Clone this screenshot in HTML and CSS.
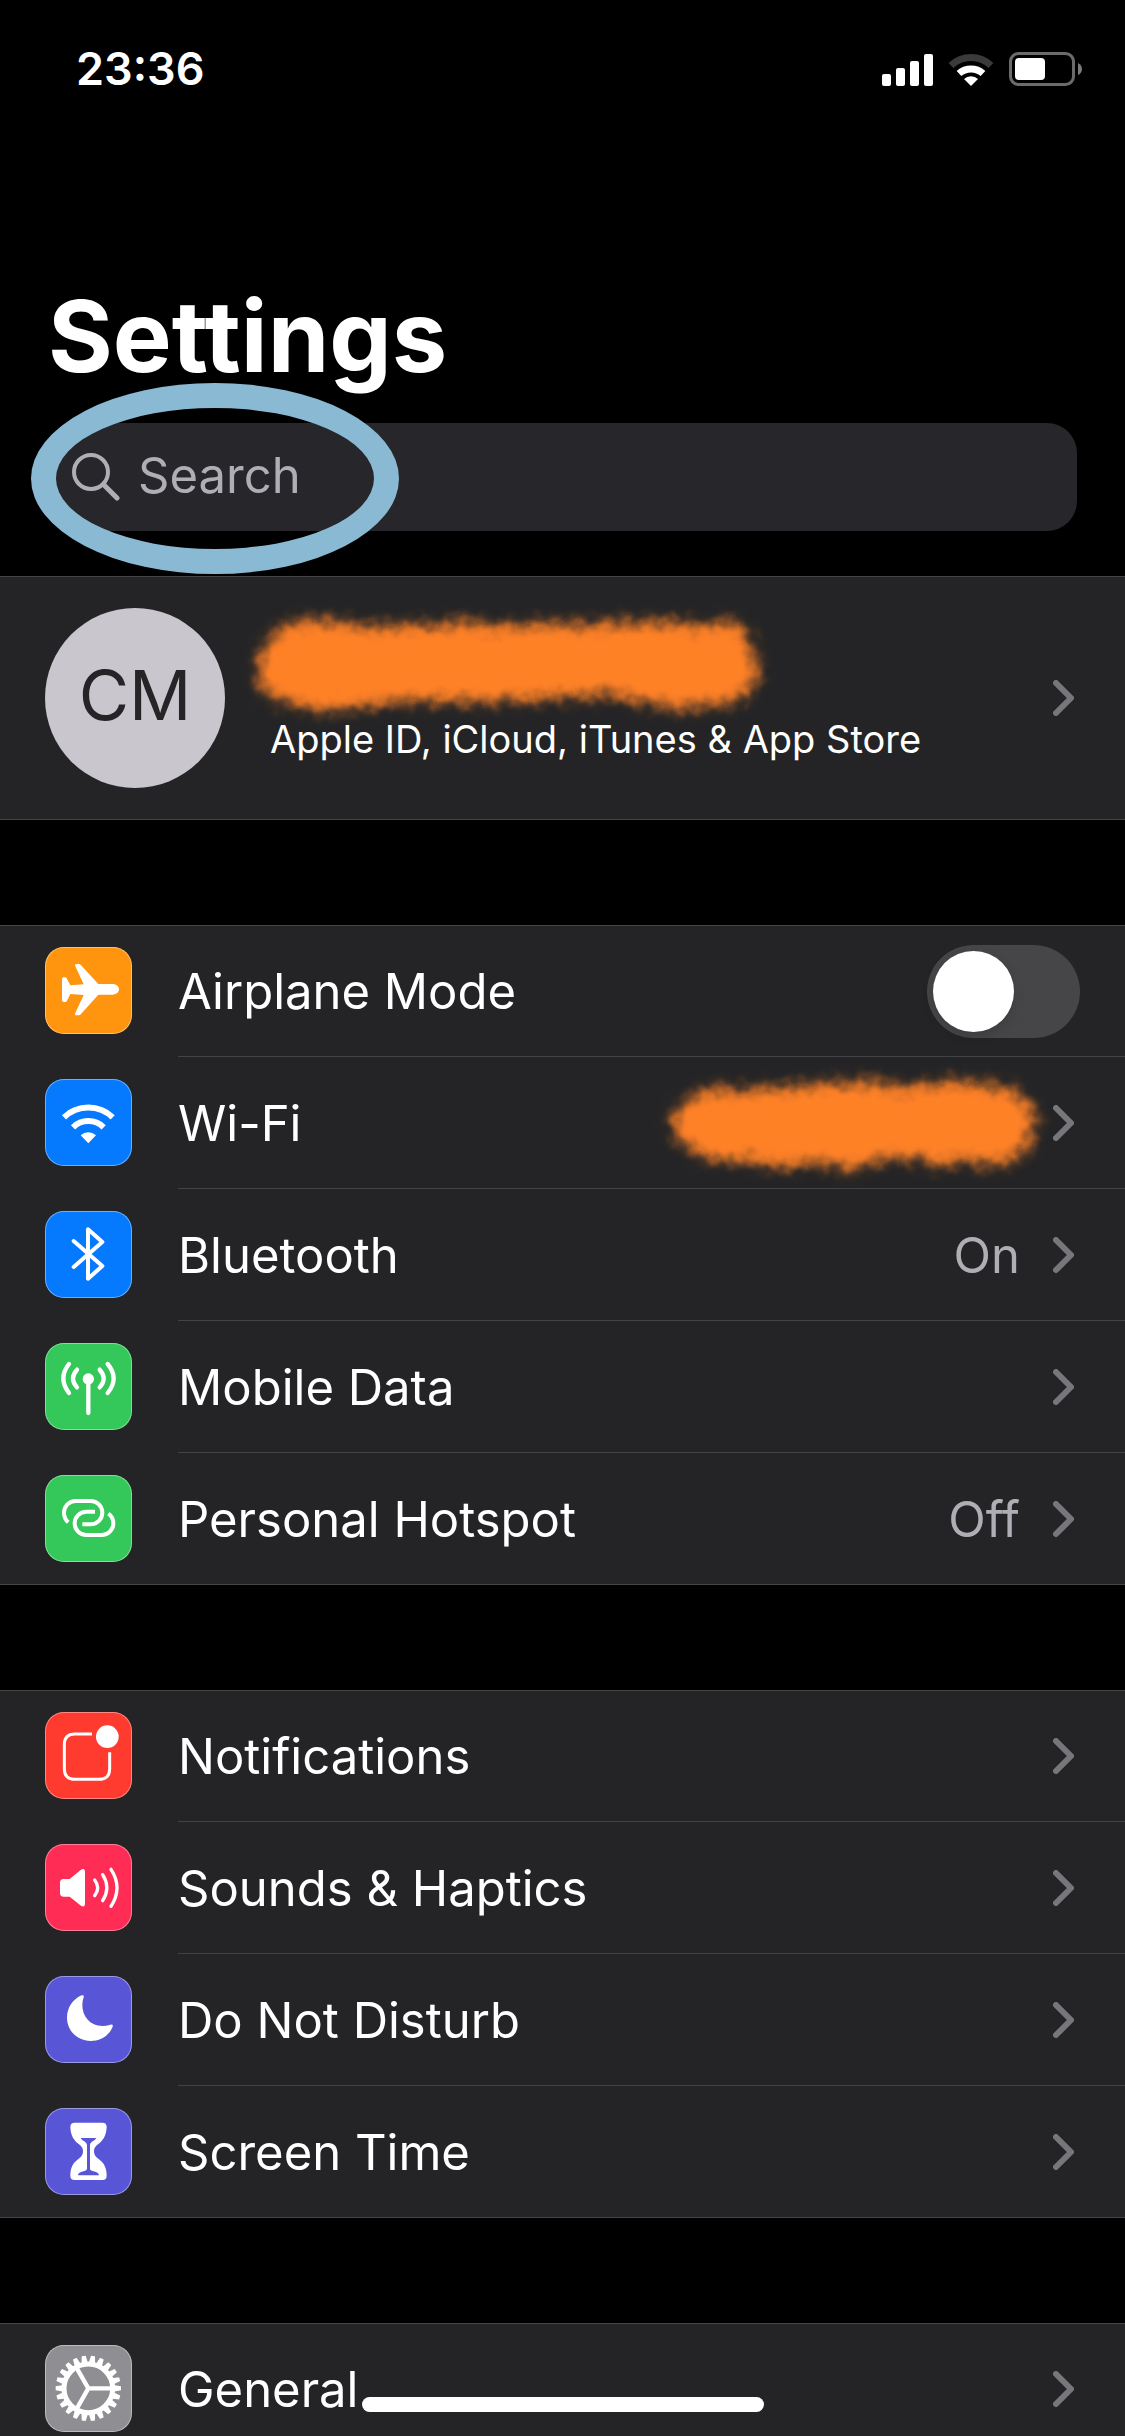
FILE: index.html
```html
<!DOCTYPE html>
<html lang="en">
<head>
<meta charset="utf-8">
<meta name="viewport" content="width=device-width, initial-scale=1">
<title>Settings</title>
<link rel="stylesheet" href="styles.css">
</head>
<body>
<svg class="sprite" aria-hidden="true">
  <defs>
    <symbol id="chevron" viewBox="0 0 21 36"><path d="M3 3 L18 18 L3 33" fill="none" stroke="currentColor" stroke-width="6" stroke-linecap="round" stroke-linejoin="round"/></symbol>
    <path id="tooth" d="M204 120 L228 124 V136 L204 140 Z"/>
    <filter id="soft" x="-10%" y="-25%" width="120%" height="150%">
      <feGaussianBlur stdDeviation="7" result="blurred"/>
      <feTurbulence type="fractalNoise" baseFrequency="0.07" numOctaves="2" seed="4" result="noise"/>
      <feDisplacementMap in="blurred" in2="noise" scale="14" xChannelSelector="R" yChannelSelector="G"/>
    </filter>
  </defs>
</svg>

<div class="screen">
  <div class="status">
    <time class="clock">23:36</time>
    <div class="status-icons">
      <svg width="51" height="33" viewBox="0 0 51 33" fill="#fff" aria-label="Signal">
        <rect x="0" y="21" width="9" height="12" rx="2"/><rect x="14" y="15" width="9" height="18" rx="2"/><rect x="28" y="8" width="9" height="25" rx="2"/><rect x="42" y="1" width="9" height="32" rx="2"/>
      </svg>
      <svg width="46" height="33" viewBox="0 0 46 33" fill="none" stroke-width="7" aria-label="Wi-Fi">
        <path d="M3 12.5 A29 29 0 0 1 43 12.5" stroke="#3a3a3a"/>
        <path d="M11 20.5 A18 18 0 0 1 35 20.5" stroke="#fff"/>
        <path d="M23 33 L16 26 A10 10 0 0 1 30 26 Z" fill="#fff"/>
      </svg>
      <svg width="73" height="34" viewBox="0 0 73 34" aria-label="Battery">
        <rect x="1.5" y="1.5" width="63" height="31" rx="8" fill="none" stroke="#6b6b6b" stroke-width="3"/>
        <rect x="6" y="6" width="30" height="22" rx="4" fill="#fff"/>
        <path d="M69 11 Q73 13 73 17 Q73 21 69 23 Z" fill="#7b7b7b"/>
      </svg>
    </div>
  </div>

  <header class="head">
    <h1 class="title">Settings</h1>
    <div class="search">
      <svg class="search-icon" viewBox="0 0 48 49" fill="none" stroke="#aeaeb4" stroke-width="4" stroke-linecap="round" aria-hidden="true"><circle cx="19" cy="20" r="17"/><path d="M32 33 L45 46" stroke-width="5"/></svg>
      <input class="search-input" type="search" placeholder="Search" aria-label="Search">
      <span class="ring"></span>
    </div>
  </header>

  <main class="groups">
    <section class="group">
      <a class="profile" href="#account">
        <span class="avatar">CM</span>
        <span class="profile-text">Apple ID, iCloud, iTunes &amp; App Store</span>
        <svg class="scribble scribble-name" viewBox="0 0 530 120" aria-hidden="true">
          <path filter="url(#soft)" fill="#ff8128" d="M34 22 L52 14 L85 12 L118 18 L165 18 L215 15 L262 18 L310 15 L350 17 L380 14 L425 14 L460 18 L490 13 L503 26 L512 50 L517 66 L508 80 L492 94 L470 98 L430 100 L395 93 L370 87 L310 90 L240 94 L170 93 L110 99 L72 104 L45 94 L20 85 L14 66 L17 44 Z"/>
        </svg>
        <svg class="chevron"><use href="#chevron"/></svg>
      </a>
    </section>

    <ul class="group">
      <li>
        <label class="row">
          <svg class="icon orange" viewBox="0 0 261 261" fill="#fff" aria-hidden="true"><path d="M51 96 Q51 91 56 91 H60 Q64 91 66 95 L76 115 L116 112 L91 58 Q88 51 95 51 H101 Q105 51 108 55 L160 111 H202 C215 111 222 119 222 127 C222 135 215 143 202 143 H160 L108 201 Q105 205 101 205 H95 Q88 205 91 198 L116 144 L76 141 L66 161 Q64 165 60 165 H56 Q51 165 51 160 Z"/></svg>
          <span class="row-body"><span class="name">Airplane Mode</span><input class="switch" type="checkbox" role="switch"></span>
        </label>
      </li>
      <li>
        <a class="row" href="#wifi">
          <svg class="icon blue" viewBox="0 0 261 261" fill="none" stroke="#fff" stroke-width="18" aria-hidden="true"><path d="M57 115 A106 106 0 0 1 203 115 M84 145 A66 66 0 0 1 176 145"/><path d="M130 193 L107 169 A34 34 0 0 1 153 169 Z" fill="#fff" stroke="none"/></svg>
          <span class="row-body"><span class="name">Wi-Fi</span>
            <svg class="scribble scribble-network" viewBox="0 0 390 120" aria-hidden="true">
              <path filter="url(#soft)" fill="#ff8128" d="M36 28 L55 20 L82 23 L110 20 L160 17 L205 13 L235 19 L270 17 L290 13 L320 15 L355 21 L370 34 L378 50 L376 66 L368 84 L350 93 L330 97 L305 92 L282 97 L250 89 L220 93 L194 102 L165 95 L122 99 L95 93 L60 93 L40 86 L20 70 L13 52 L24 37 Z"/>
            </svg>
            <svg class="chevron"><use href="#chevron"/></svg></span>
        </a>
      </li>
      <li>
        <a class="row" href="#bluetooth">
          <svg class="icon blue" viewBox="0 0 261 261" fill="none" stroke="#fff" stroke-width="12" stroke-linecap="round" stroke-linejoin="round" aria-hidden="true"><path d="M86 90 L172 165 L129 203 V55 L172 93 L86 168"/></svg>
          <span class="row-body"><span class="name">Bluetooth</span><span class="value">On</span><svg class="chevron"><use href="#chevron"/></svg></span>
        </a>
      </li>
      <li>
        <a class="row" href="#mobile-data">
          <svg class="icon green" viewBox="0 0 261 261" fill="none" stroke="#fff" stroke-width="13" stroke-linecap="round" aria-hidden="true"><path d="M130 108 V210 M96 80 Q72 106 96 133 M164 80 Q188 106 164 133 M72 63 Q38 106 72 150 M188 63 Q224 106 188 150"/><circle cx="130" cy="108" r="17" fill="#fff" stroke="none"/></svg>
          <span class="row-body"><span class="name">Mobile Data</span><svg class="chevron"><use href="#chevron"/></svg></span>
        </a>
      </li>
      <li>
        <a class="row" href="#hotspot">
          <svg class="icon green" viewBox="0 0 261 261" fill="none" stroke="#fff" stroke-width="12" aria-hidden="true"><path d="M70 142 C61 134 57 124 57 113 A35 35 0 0 1 92 78 H137 A35 35 0 0 1 137 148 H112" /><path d="M150 110 H124 A35 35 0 0 0 124 180 H170 A35 35 0 0 0 205 145 C205 134 200 123 190 116"/></svg>
          <span class="row-body"><span class="name">Personal Hotspot</span><span class="value">Off</span><svg class="chevron"><use href="#chevron"/></svg></span>
        </a>
      </li>
    </ul>

    <ul class="group">
      <li>
        <a class="row" href="#notifications">
          <svg class="icon red" viewBox="0 0 261 261" fill="none" stroke="#fff" stroke-width="9" aria-hidden="true"><path d="M141 66 H90 Q58 66 58 98 V170 Q58 202 90 202 H162 Q194 202 194 170 V121"/><circle cx="187" cy="74" r="34" fill="#fff" stroke="none"/></svg>
          <span class="row-body"><span class="name">Notifications</span><svg class="chevron"><use href="#chevron"/></svg></span>
        </a>
      </li>
      <li>
        <a class="row" href="#sounds">
          <svg class="icon pink" viewBox="0 0 261 261" fill="none" stroke="#fff" stroke-width="10" stroke-linecap="round" aria-hidden="true"><path d="M45 116 Q45 105 56 105 H74 L108 77 Q120 70 120 84 V178 Q120 192 108 185 L74 158 H56 Q45 158 45 147 Z" fill="#fff" stroke="none"/><path d="M149 108 Q167 131 149 155 M173 92 Q198 131 173 170 M198 76 Q234 131 198 187"/></svg>
          <span class="row-body"><span class="name">Sounds &amp; Haptics</span><svg class="chevron"><use href="#chevron"/></svg></span>
        </a>
      </li>
      <li>
        <a class="row" href="#dnd">
          <svg class="icon indigo" viewBox="0 0 261 261" fill="#fff" aria-hidden="true"><path d="M110 58 Q118 56 116 64 C108 85 112 112 127 130 C143 149 170 155 196 146 Q205 143 203 152 C192 180 165 195 137 195 C98 195 66 164 66 125 C66 95 84 69 110 58 Z"/></svg>
          <span class="row-body"><span class="name">Do Not Disturb</span><svg class="chevron"><use href="#chevron"/></svg></span>
        </a>
      </li>
      <li>
        <a class="row" href="#screen-time">
          <svg class="icon indigo" viewBox="0 0 261 261" fill="#fff" fill-rule="evenodd" aria-hidden="true"><path d="M76 57 Q76 44 89 44 H172 Q185 44 185 57 C184 85 173 98 160 108 C150 116 147 121 147 129 C147 139 150 145 160 152 C175 163 185 176 185 203 Q185 216 172 216 H89 Q76 216 76 203 C76 176 86 163 101 152 C111 145 114 139 114 129 C114 121 111 116 101 108 C88 98 77 85 76 57 Z M107 90 C112 99 125 101 126 111 V183 Q125 187 118 189 C105 192 100 196 99 202 H162 C161 196 156 192 143 189 Q135 187 135 183 V111 C136 101 149 99 154 90 Z"/></svg>
          <span class="row-body"><span class="name">Screen Time</span><svg class="chevron"><use href="#chevron"/></svg></span>
        </a>
      </li>
    </ul>

    <ul class="group">
      <li>
        <a class="row" href="#general">
          <svg class="icon gray" viewBox="0 0 261 261" fill="#fff" aria-hidden="true">
            <circle cx="130" cy="130" r="73" fill="none" stroke="#fff" stroke-width="15"/>
            <path d="M130 130 H203 M130 130 L94 67 M130 130 L94 193" stroke="#fff" stroke-width="13"/>
            <use href="#tooth"/>
            <use href="#tooth" transform="rotate(16.36 130 130)"/>
            <use href="#tooth" transform="rotate(32.73 130 130)"/>
            <use href="#tooth" transform="rotate(49.09 130 130)"/>
            <use href="#tooth" transform="rotate(65.45 130 130)"/>
            <use href="#tooth" transform="rotate(81.82 130 130)"/>
            <use href="#tooth" transform="rotate(98.18 130 130)"/>
            <use href="#tooth" transform="rotate(114.55 130 130)"/>
            <use href="#tooth" transform="rotate(130.91 130 130)"/>
            <use href="#tooth" transform="rotate(147.27 130 130)"/>
            <use href="#tooth" transform="rotate(163.64 130 130)"/>
            <use href="#tooth" transform="rotate(180 130 130)"/>
            <use href="#tooth" transform="rotate(196.36 130 130)"/>
            <use href="#tooth" transform="rotate(212.73 130 130)"/>
            <use href="#tooth" transform="rotate(229.09 130 130)"/>
            <use href="#tooth" transform="rotate(245.45 130 130)"/>
            <use href="#tooth" transform="rotate(261.82 130 130)"/>
            <use href="#tooth" transform="rotate(278.18 130 130)"/>
            <use href="#tooth" transform="rotate(294.55 130 130)"/>
            <use href="#tooth" transform="rotate(310.91 130 130)"/>
            <use href="#tooth" transform="rotate(327.27 130 130)"/>
            <use href="#tooth" transform="rotate(343.64 130 130)"/>
          </svg>
          <span class="row-body"><span class="name">General</span><svg class="chevron"><use href="#chevron"/></svg></span>
        </a>
      </li>
    </ul>
  </main>
  <div class="home-bar"></div>
</div>
</body>
</html>
```

FILE: styles.css
```css
* { box-sizing: border-box; }

body {
  margin: 0;
  background: #000;
  color: #fff;
  font-family: Inter, "Liberation Sans", sans-serif;
  font-size: 49px;
  line-height: 60px;
}

.sprite { position: absolute; width: 0; height: 0; }

.screen {
  height: 100vh;
  overflow-y: auto;
  scrollbar-width: none;
}

/* status bar */
.status {
  display: flex;
  justify-content: space-between;
  align-items: center;
  height: 138px;
  padding: 0 43px 0 76px;
}
.clock { font-size: 45px; font-weight: 600; }
.status-icons { display: flex; align-items: center; gap: 15px; }

/* title and search */
.head { padding: 138px 48px 45px; }
.title {
  margin: 0 0 27px;
  font-size: 99px;
  font-weight: 700;
  line-height: 120px;
}
.search {
  position: relative;
  display: flex;
  align-items: center;
  gap: 18px;
  height: 108px;
  padding: 0 24px 2px;
  border-radius: 30px;
  background: #27272b;
}
.search-icon { flex: none; width: 48px; height: 49px; }
.search-input {
  flex: 1;
  min-width: 0;
  padding: 0;
  border: 0;
  outline: 0;
  background: none;
  color: #fff;
  font: inherit;
  appearance: none;
}
.search-input::placeholder { color: #aeaeb4; opacity: 1; }
.ring {
  position: absolute;
  left: -17px;
  top: -40px;
  width: 368px;
  height: 191px;
  border: 25px solid #89b9d3;
  border-radius: 50%;
  pointer-events: none;
}

/* grouped lists */
.groups { display: flex; flex-direction: column; gap: 105px; }
.group {
  margin: 0;
  padding: 0;
  list-style: none;
  background: #242426;
  box-shadow: inset 0 1px #454547, inset 0 -1px #454547;
}
.row {
  display: flex;
  align-items: center;
  gap: 46px;
  height: 132px;
  padding-left: 45px;
  color: inherit;
  text-decoration: none;
}
.row-body {
  position: relative;
  flex: 1;
  display: flex;
  align-items: center;
  gap: 33px;
  height: 100%;
  padding-right: 51px;
  border-bottom: 1px solid #434345;
}
li:last-child .row-body { border-bottom-color: transparent; }
.name { flex: 1; padding-top: 3px; }
.value { padding-top: 3px; color: #aeaeb4; }
.chevron { flex: none; width: 21px; height: 36px; color: #77777b; }

.icon {
  flex: none;
  width: 87px;
  height: 87px;
  margin-bottom: 1px;
  border-radius: 19px;
  box-shadow: inset 0 0 0 1px #ffffff66;
}
.orange { background: #ff950f; }
.blue { background: #067aff; }
.green { background: #34c759; }
.red { background: #ff3b30; }
.pink { background: #ff2d55; }
.indigo { background: #5856d6; }
.gray { background: #8e8e93; }

.switch {
  appearance: none;
  display: flex;
  align-items: center;
  width: 153px;
  height: 93px;
  margin: 2px -6px 0 0;
  padding: 6px;
  border-radius: 47px;
  background: #464649;
}
.switch::before {
  content: "";
  width: 81px;
  height: 81px;
  border-radius: 50%;
  background: #fff;
  box-shadow: 0 4px 12px #00000026;
}
.switch:checked { justify-content: flex-end; background: #30d158; }

/* profile */
.profile {
  position: relative;
  display: flex;
  align-items: center;
  gap: 45px;
  height: 244px;
  padding: 0 51px 0 45px;
  color: inherit;
  text-decoration: none;
}
.avatar {
  flex: none;
  display: grid;
  place-items: center;
  width: 180px;
  height: 180px;
  padding-bottom: 6px;
  border-radius: 50%;
  background: #c9c6ce;
  color: #252527;
  font-size: 69px;
}
.profile-text { flex: 1; padding-top: 82px; font-size: 38px; line-height: 48px; }

/* hand-painted marks over private text */
.scribble { position: absolute; pointer-events: none; overflow: visible; }
.scribble-name { left: 243px; top: 32px; width: 530px; height: 120px; }
.scribble-network { right: 78px; top: 11px; width: 390px; height: 120px; }

.home-bar {
  position: fixed;
  left: 50%;
  bottom: 24px;
  width: 402px;
  height: 15px;
  border-radius: 8px;
  background: #fff;
  transform: translateX(-50%);
}
```
